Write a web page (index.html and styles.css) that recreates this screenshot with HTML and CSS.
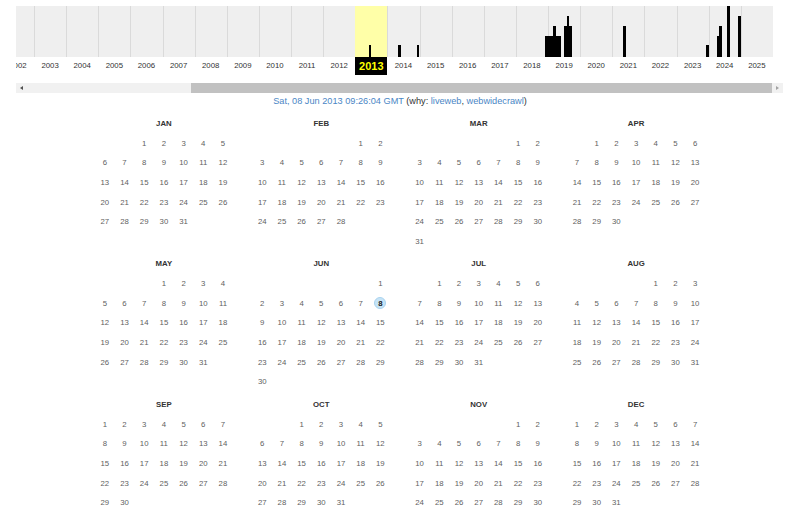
FILE: index.html
```html
<!DOCTYPE html>
<html>
<head>
<meta charset="utf-8">
<title>Wayback calendar 2013</title>
<link rel="stylesheet" href="styles.css">
</head>
<body>
<div class="timeline">
  <div class="viewport">
    <div class="years">
      <div class="year"><div class="spark"></div><div class="label">2002</div></div>
      <div class="year"><div class="spark"></div><div class="label">2003</div></div>
      <div class="year"><div class="spark"></div><div class="label">2004</div></div>
      <div class="year"><div class="spark"></div><div class="label">2005</div></div>
      <div class="year"><div class="spark"></div><div class="label">2006</div></div>
      <div class="year"><div class="spark"></div><div class="label">2007</div></div>
      <div class="year"><div class="spark"></div><div class="label">2008</div></div>
      <div class="year"><div class="spark"></div><div class="label">2009</div></div>
      <div class="year"><div class="spark"></div><div class="label">2010</div></div>
      <div class="year"><div class="spark"></div><div class="label">2011</div></div>
      <div class="year"><div class="spark"></div><div class="label">2012</div></div>
      <div class="year current"><div class="spark"><i class="bar l1" style="grid-column:6"></i></div><div class="label">2013</div></div>
      <div class="year"><div class="spark"><i class="bar l1" style="grid-column:5"></i><i class="bar l1" style="grid-column:12"></i></div><div class="label">2014</div></div>
      <div class="year"><div class="spark"></div><div class="label">2015</div></div>
      <div class="year"><div class="spark"></div><div class="label">2016</div></div>
      <div class="year"><div class="spark"></div><div class="label">2017</div></div>
      <div class="year"><div class="spark"><i class="bar l2" style="grid-column:12"></i></div><div class="label">2018</div></div>
      <div class="year"><div class="spark"><i class="bar l2" style="grid-column:1"></i><i class="bar l2" style="grid-column:2"></i><i class="bar l3" style="grid-column:3"></i><i class="bar l2" style="grid-column:4"></i><i class="bar l2" style="grid-column:5"></i><i class="bar l3" style="grid-column:7"></i><i class="bar l4" style="grid-column:8"></i><i class="bar l3" style="grid-column:9"></i></div><div class="label">2019</div></div>
      <div class="year"><div class="spark"></div><div class="label">2020</div></div>
      <div class="year"><div class="spark"><i class="bar l3" style="grid-column:5"></i></div><div class="label">2021</div></div>
      <div class="year"><div class="spark"></div><div class="label">2022</div></div>
      <div class="year"><div class="spark"><i class="bar l1" style="grid-column:12"></i></div><div class="label">2023</div></div>
      <div class="year"><div class="spark"><i class="bar l2" style="grid-column:4"></i><i class="bar l3" style="grid-column:5"></i><i class="bar l5" style="grid-column:8"></i><i class="bar l4" style="grid-column:12"></i></div><div class="label">2024</div></div>
      <div class="year"><div class="spark"></div><div class="label">2025</div></div>
    </div>
  </div>
  <div class="scrollbar">
    <div class="sb-btn"><span class="arrow-left"></span></div>
    <div class="sb-space"></div>
    <div class="sb-thumb"></div>
    <div class="sb-btn"><span class="arrow-right"></span></div>
  </div>
</div>

<div class="caption"><a class="link">Sat, 08 Jun 2013 09:26:04 GMT</a> (why: <a class="link">liveweb</a>, <a class="link">webwidecrawl</a>)</div>

<div class="calendar">
  <div class="month"><div class="mname">JAN</div><div class="days">
    <span class="s2">1</span><span>2</span><span>3</span><span>4</span><span>5</span><span>6</span><span>7</span><span>8</span><span>9</span><span>10</span><span>11</span><span>12</span><span>13</span><span>14</span><span>15</span><span>16</span><span>17</span><span>18</span><span>19</span><span>20</span><span>21</span><span>22</span><span>23</span><span>24</span><span>25</span><span>26</span><span>27</span><span>28</span><span>29</span><span>30</span><span>31</span>
  </div></div>
  <div class="month"><div class="mname">FEB</div><div class="days">
    <span class="s5">1</span><span>2</span><span>3</span><span>4</span><span>5</span><span>6</span><span>7</span><span>8</span><span>9</span><span>10</span><span>11</span><span>12</span><span>13</span><span>14</span><span>15</span><span>16</span><span>17</span><span>18</span><span>19</span><span>20</span><span>21</span><span>22</span><span>23</span><span>24</span><span>25</span><span>26</span><span>27</span><span>28</span>
  </div></div>
  <div class="month"><div class="mname">MAR</div><div class="days">
    <span class="s5">1</span><span>2</span><span>3</span><span>4</span><span>5</span><span>6</span><span>7</span><span>8</span><span>9</span><span>10</span><span>11</span><span>12</span><span>13</span><span>14</span><span>15</span><span>16</span><span>17</span><span>18</span><span>19</span><span>20</span><span>21</span><span>22</span><span>23</span><span>24</span><span>25</span><span>26</span><span>27</span><span>28</span><span>29</span><span>30</span><span>31</span>
  </div></div>
  <div class="month"><div class="mname">APR</div><div class="days">
    <span class="s1">1</span><span>2</span><span>3</span><span>4</span><span>5</span><span>6</span><span>7</span><span>8</span><span>9</span><span>10</span><span>11</span><span>12</span><span>13</span><span>14</span><span>15</span><span>16</span><span>17</span><span>18</span><span>19</span><span>20</span><span>21</span><span>22</span><span>23</span><span>24</span><span>25</span><span>26</span><span>27</span><span>28</span><span>29</span><span>30</span>
  </div></div>
  <div class="month"><div class="mname">MAY</div><div class="days">
    <span class="s3">1</span><span>2</span><span>3</span><span>4</span><span>5</span><span>6</span><span>7</span><span>8</span><span>9</span><span>10</span><span>11</span><span>12</span><span>13</span><span>14</span><span>15</span><span>16</span><span>17</span><span>18</span><span>19</span><span>20</span><span>21</span><span>22</span><span>23</span><span>24</span><span>25</span><span>26</span><span>27</span><span>28</span><span>29</span><span>30</span><span>31</span>
  </div></div>
  <div class="month"><div class="mname">JUN</div><div class="days">
    <span class="s6">1</span><span>2</span><span>3</span><span>4</span><span>5</span><span>6</span><span>7</span><span class="hit"><b>8</b></span><span>9</span><span>10</span><span>11</span><span>12</span><span>13</span><span>14</span><span>15</span><span>16</span><span>17</span><span>18</span><span>19</span><span>20</span><span>21</span><span>22</span><span>23</span><span>24</span><span>25</span><span>26</span><span>27</span><span>28</span><span>29</span><span>30</span>
  </div></div>
  <div class="month"><div class="mname">JUL</div><div class="days">
    <span class="s1">1</span><span>2</span><span>3</span><span>4</span><span>5</span><span>6</span><span>7</span><span>8</span><span>9</span><span>10</span><span>11</span><span>12</span><span>13</span><span>14</span><span>15</span><span>16</span><span>17</span><span>18</span><span>19</span><span>20</span><span>21</span><span>22</span><span>23</span><span>24</span><span>25</span><span>26</span><span>27</span><span>28</span><span>29</span><span>30</span><span>31</span>
  </div></div>
  <div class="month"><div class="mname">AUG</div><div class="days">
    <span class="s4">1</span><span>2</span><span>3</span><span>4</span><span>5</span><span>6</span><span>7</span><span>8</span><span>9</span><span>10</span><span>11</span><span>12</span><span>13</span><span>14</span><span>15</span><span>16</span><span>17</span><span>18</span><span>19</span><span>20</span><span>21</span><span>22</span><span>23</span><span>24</span><span>25</span><span>26</span><span>27</span><span>28</span><span>29</span><span>30</span><span>31</span>
  </div></div>
  <div class="month"><div class="mname">SEP</div><div class="days">
    <span>1</span><span>2</span><span>3</span><span>4</span><span>5</span><span>6</span><span>7</span><span>8</span><span>9</span><span>10</span><span>11</span><span>12</span><span>13</span><span>14</span><span>15</span><span>16</span><span>17</span><span>18</span><span>19</span><span>20</span><span>21</span><span>22</span><span>23</span><span>24</span><span>25</span><span>26</span><span>27</span><span>28</span><span>29</span><span>30</span>
  </div></div>
  <div class="month"><div class="mname">OCT</div><div class="days">
    <span class="s2">1</span><span>2</span><span>3</span><span>4</span><span>5</span><span>6</span><span>7</span><span>8</span><span>9</span><span>10</span><span>11</span><span>12</span><span>13</span><span>14</span><span>15</span><span>16</span><span>17</span><span>18</span><span>19</span><span>20</span><span>21</span><span>22</span><span>23</span><span>24</span><span>25</span><span>26</span><span>27</span><span>28</span><span>29</span><span>30</span><span>31</span>
  </div></div>
  <div class="month"><div class="mname">NOV</div><div class="days">
    <span class="s5">1</span><span>2</span><span>3</span><span>4</span><span>5</span><span>6</span><span>7</span><span>8</span><span>9</span><span>10</span><span>11</span><span>12</span><span>13</span><span>14</span><span>15</span><span>16</span><span>17</span><span>18</span><span>19</span><span>20</span><span>21</span><span>22</span><span>23</span><span>24</span><span>25</span><span>26</span><span>27</span><span>28</span><span>29</span><span>30</span>
  </div></div>
  <div class="month"><div class="mname">DEC</div><div class="days">
    <span>1</span><span>2</span><span>3</span><span>4</span><span>5</span><span>6</span><span>7</span><span>8</span><span>9</span><span>10</span><span>11</span><span>12</span><span>13</span><span>14</span><span>15</span><span>16</span><span>17</span><span>18</span><span>19</span><span>20</span><span>21</span><span>22</span><span>23</span><span>24</span><span>25</span><span>26</span><span>27</span><span>28</span><span>29</span><span>30</span><span>31</span>
  </div></div>
</div>
</body>
</html>
```

FILE: styles.css
```css
html, body {
  margin: 0;
  padding: 0;
  height: 100%;
  overflow: hidden;
  background: #fff;
  font-family: "Liberation Sans", Arial, sans-serif;
}

.timeline {
  margin: 6px 0 0 16px;
  width: 767px;
}

.viewport {
  width: 757px;
  overflow: hidden;
}

.years {
  display: flex;
  margin-left: -14.13px;
}

.year {
  flex: 0 0 32.13px;
  width: 32.13px;
}

.spark {
  height: 51px;
  background-color: #efefef;
  background-image: linear-gradient(to right, #dadada 1px, transparent 1px);
  display: grid;
  grid-template-columns: repeat(12, 1fr);
  align-items: end;
}

.current .spark {
  background-color: #ffffa8;
  background-image: none;
}

.bar {
  display: block;
  grid-row: 1;
  background: #000;
}

.l1 { height: 12px; }
.l2 { height: 21px; }
.l3 { height: 31px; }
.l4 { height: 41px; }
.l5 { height: 51px; }

.label {
  height: 18px;
  line-height: 18px;
  text-align: center;
  font-size: 7.8px;
  color: #333;
  white-space: nowrap;
}

.current .label {
  background: #000;
  color: #ffff00;
  font-weight: bold;
  font-size: 11px;
}

.scrollbar {
  margin-top: 8px;
  height: 9.5px;
  display: flex;
  background: #f1f1f1;
}

.sb-btn {
  width: 11px;
  display: flex;
  align-items: center;
  justify-content: center;
}

.sb-space {
  width: 163.7px;
}

.sb-thumb {
  flex: 1;
  background: #c1c1c1;
}

.arrow-left {
  width: 0;
  height: 0;
  border-top: 2px solid transparent;
  border-bottom: 2px solid transparent;
  border-right: 3px solid #505050;
}

.arrow-right {
  width: 0;
  height: 0;
  border-top: 2px solid transparent;
  border-bottom: 2px solid transparent;
  border-left: 3px solid #a3a3a3;
}

.caption {
  margin: 2px 0 6px;
  height: 13px;
  line-height: 13px;
  text-align: center;
  font-size: 9.2px;
  color: #333;
}

.link {
  color: #4a86c5;
  text-decoration: none;
}

.calendar {
  width: 629.6px;
  margin: 0 auto;
  display: grid;
  grid-template-columns: repeat(4, 157.4px);
  grid-auto-rows: 140.5px;
}

.month {
  display: flex;
  flex-direction: column;
  align-items: center;
}

.mname {
  height: 19.7px;
  line-height: 19.7px;
  font-size: 7.8px;
  font-weight: bold;
  color: #333;
}

.days {
  display: grid;
  grid-template-columns: repeat(7, 19.7px);
  grid-auto-rows: 19.7px;
}

.days span {
  display: flex;
  align-items: center;
  justify-content: center;
  font-size: 7.8px;
  color: #5f5f5f;
}

.s1 { grid-column-start: 2; }
.s2 { grid-column-start: 3; }
.s3 { grid-column-start: 4; }
.s4 { grid-column-start: 5; }
.s5 { grid-column-start: 6; }
.s6 { grid-column-start: 7; }

.hit b {
  display: flex;
  align-items: center;
  justify-content: center;
  width: 10px;
  height: 10px;
  border-radius: 50%;
  background: #c6e4f7;
  border: 1px solid #a9d3ef;
  color: #1b1b1b;
  font-weight: bold;
}
```
